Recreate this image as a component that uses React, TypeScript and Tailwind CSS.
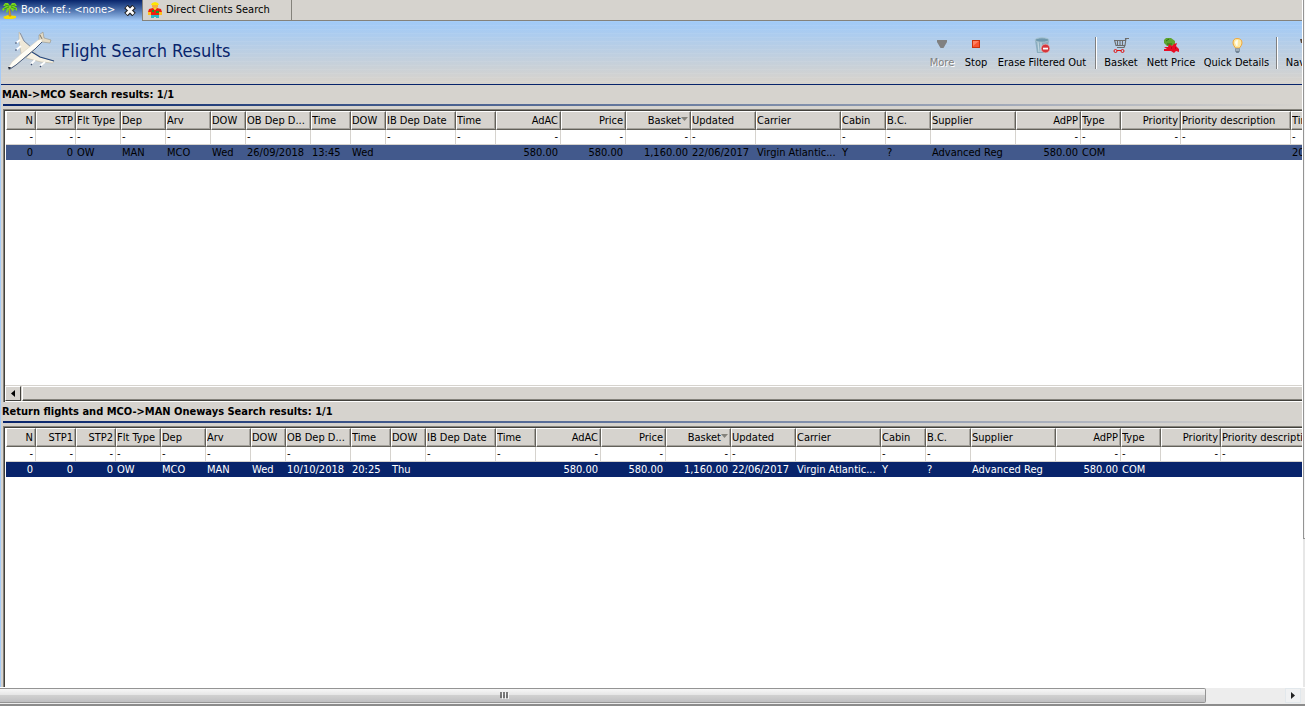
import { ReactNode } from 'react';
import { clsx } from 'clsx';

type Column = { label: string; width: number; filter?: boolean; right?: boolean; sorted?: boolean };

const COMMON_COLUMNS: Column[] = [
  { label: 'Flt Type', width: 45, filter: true },
  { label: 'Dep', width: 45, filter: true },
  { label: 'Arv', width: 45, filter: true },
  { label: 'DOW', width: 35 },
  { label: 'OB Dep D...', width: 65, filter: true },
  { label: 'Time', width: 40 },
  { label: 'DOW', width: 35 },
  { label: 'IB Dep Date', width: 70, filter: true },
  { label: 'Time', width: 40, filter: true },
  { label: 'AdAC', width: 65, filter: true, right: true },
  { label: 'Price', width: 65, filter: true, right: true },
  { label: 'Basket', width: 65, filter: true, right: true, sorted: true },
  { label: 'Updated', width: 65, filter: true },
  { label: 'Carrier', width: 85 },
  { label: 'Cabin', width: 45, filter: true },
  { label: 'B.C.', width: 45, filter: true },
  { label: 'Supplier', width: 85 },
  { label: 'AdPP', width: 65, filter: true, right: true },
  { label: 'Type', width: 40, filter: true },
  { label: 'Priority', width: 60, filter: true, right: true },
  { label: 'Priority description', width: 110, filter: true },
];

const OUTBOUND_COLUMNS: Column[] = [
  { label: 'N', width: 30, filter: true, right: true },
  { label: 'STP', width: 40, filter: true, right: true },
  ...COMMON_COLUMNS,
  { label: 'Time', width: 60, filter: true },
];

const RETURN_COLUMNS: Column[] = [
  { label: 'N', width: 30, filter: true, right: true },
  { label: 'STP1', width: 40, filter: true, right: true },
  { label: 'STP2', width: 40, filter: true, right: true },
  ...COMMON_COLUMNS,
];

const OUTBOUND_ROW = [
  '0', '0', 'OW', 'MAN', 'MCO', 'Wed', '26/09/2018', '13:45', 'Wed', '', '', '580.00', '580.00', '1,160.00',
  '22/06/2017', 'Virgin Atlantic...', 'Y', '?', 'Advanced Reg', '580.00', 'COM', '', '', '20:25',
];

const RETURN_ROW = [
  '0', '0', '0', 'OW', 'MCO', 'MAN', 'Wed', '10/10/2018', '20:25', 'Thu', '', '', '580.00', '580.00', '1,160.00',
  '22/06/2017', 'Virgin Atlantic...', 'Y', '?', 'Advanced Reg', '580.00', 'COM', '', '',
];

function PalmIcon() {
  return (
    <svg viewBox="0 0 16 17" className="w-4 h-[17px] shrink-0" aria-hidden="true">
      <path d="M1 15 L6 13 L14 14 L14 16 L10 17 H3Z" fill="#f5dc00" />
      <path d="M7.5 5 L9 14 H7 L7 6Z" fill="#e0a020" stroke="#b07a10" strokeWidth=".5" />
      <path d="M8 4 L6 1 L3 1 L1 4 L4 4 L0 7 L1 9 L5 6 L4 10 L5 11 L8 6 L11 10 L12 7 L15 9 V6 L12 4 L15 4 L13 1 L10 1Z" fill="#7ad321" />
      <path d="M7 4 L3 3 M7 5 L2 7 M9 4 L13 3 M9 5 L14 7" stroke="#2f8f0c" strokeWidth=".8" />
    </svg>
  );
}

function ClientIcon() {
  return (
    <svg viewBox="0 0 16 17" className="w-4 h-[17px] shrink-0" aria-hidden="true">
      <path d="M5 3 H11 V5 L9 7 H7 L5 5Z" fill="#f6b23c" />
      <path d="M4 3 L5 1 L8 0 L11 1 L12 3Z" fill="#ffe600" />
      <path d="M2 7 L6 6 L8 8 L10 6 L14 7 L15 10 L12 11 V14 H4 V11 L1 10Z" fill="#ee2210" />
      <path d="M1 10 L4 10 L4 13 L1 13Z M12 10 H15 V13 H12Z" fill="#ffc01e" />
      <path d="M5 8 H7 V10 H5Z M9 9 H12 V11 H9Z" fill="#19a02c" />
      <path d="M6.5 6 L8 8 L9.5 6Z" fill="#ffe600" />
      <path d="M4 13 H12 V16 H9 V15 H7 V16 H4Z" fill="#2bb9c4" />
    </svg>
  );
}

function PlaneIcon() {
  return (
    <svg viewBox="0 0 48 40" className="w-12 h-10 shrink-0" aria-hidden="true">
      {/* wings */}
      <path d="M12 1 L14 3 L17 10 L24 16 L15 24 L14 22 L12 9Z" fill="#efe8d8" stroke="#b9b09b" strokeWidth=".5" />
      <path d="M13 2 L17 10 L24 16" fill="none" stroke="#6d7f9e" strokeWidth=".8" />
      <path d="M26 20 L33 26 L47 30 L46 32 L34 31 L19 27Z" fill="#f6f1e3" stroke="#b9b09b" strokeWidth=".5" />
      <path d="M25 21 L33 26 L47 30" fill="none" stroke="#25477f" strokeWidth="1.2" />
      {/* tail */}
      <path d="M32 9 L32 4 L36 1 L37 7 L44 9 L43 12 L35 11Z" fill="#e1d9c5" stroke="#8b8577" strokeWidth=".5" />
      <path d="M33 4 L35 8" stroke="#7d7666" />
      {/* fuselage */}
      <path d="M1 37 L5 31 L15 22 L31 9 L35 8 L35 11 L28 18 L9 34 L2 38Z" fill="#fffdf5" stroke="#d2cbb9" strokeWidth=".5" />
      <path d="M3 38 L9 34 L28 18 L35 11" fill="none" stroke="#475a7c" />
      <path d="M1 36 L4 36 L2 39Z" fill="#222a3a" />
      {/* engines */}
      <path d="M13 9 L9 12 M14 15 L9 19 M28 29 L24 33 M38 31 L33 35" stroke="#fff" strokeWidth="1.8" />
      <path d="M8 12 H10 M8 19 H10 M24 33 L25 34 M33 35 L34 36" stroke="#38496a" strokeWidth="1.2" />
    </svg>
  );
}

function MoreIcon() {
  return (
    <svg viewBox="0 0 16 16" className="w-4 h-4" aria-hidden="true">
      <path d="M3 3 H13 V5 L9.5 11 H6.5 L3 5Z" fill="#808080" />
    </svg>
  );
}

function StopIcon() {
  return (
    <svg viewBox="0 0 16 16" className="w-4 h-4" aria-hidden="true">
      <rect x="4.5" y="3.5" width="7" height="7" fill="#f8532f" stroke="#c8330e" />
      <path d="M5 4 H11 L5 9Z" fill="#ff8060" />
    </svg>
  );
}

function EraseIcon() {
  return (
    <svg viewBox="0 0 16 16" className="w-4 h-4" aria-hidden="true">
      <path d="M1 3 H15 L13 16 H3Z" fill="#8badbf" />
      <path d="M4 5 L5 15 M7 5 V15" stroke="#c0d6e0" strokeWidth="1.3" />
      <ellipse cx="8" cy="3" rx="7" ry="2.2" fill="#6f98ad" stroke="#a7c3d0" />
      <circle cx="11.5" cy="11.5" r="4.3" fill="#d5363b" stroke="#f0b7b4" strokeWidth=".6" />
      <rect x="9" y="10.7" width="5" height="1.8" fill="#fff" />
    </svg>
  );
}

function BasketIcon() {
  return (
    <svg viewBox="0 0 16 16" className="w-4 h-4" aria-hidden="true">
      <path d="M1 3.5 H12.5 V1.5 H16 M1.5 3 L3 8.5 H12 L13 1.5 M4.5 4 V8 M7 4 V8 M9.5 4 V8 M12 8 L11 10.5 H4" fill="none" stroke="#6b6b6b" strokeWidth="1.1" />
      <path d="M4 13.5 H8" stroke="#e01414" />
      <circle cx="2.5" cy="14" r="1.5" fill="none" stroke="#e01414" />
      <circle cx="9.5" cy="14" r="1.5" fill="none" stroke="#e01414" />
    </svg>
  );
}

function NettPriceIcon() {
  return (
    <svg viewBox="0 0 16 16" className="w-4 h-4" aria-hidden="true">
      <path d="M3 1 H8 L12 4 V7 L9 9 H4 L1 6 V3Z" fill="#5fa52f" />
      <path d="M3 4 L6 2 M4 7 H9" stroke="#2f6f14" />
      <path d="M1 10 H5 L6 7 L9 9 L11 7 L14 6 L13 9 L16 12 V15 L13 14 L11 16 L8 14 H1 V12 H4Z" fill="#e80d25" />
      <path d="M8 11 H9 M12 11 H13" stroke="#8f0615" />
    </svg>
  );
}

function BulbIcon() {
  return (
    <svg viewBox="0 0 16 16" className="w-4 h-4" aria-hidden="true">
      <path d="M8 1.5 Q13 1.5 13 6 Q13 8 10.5 11 H6.5 Q4 8 4 6 Q4 1.5 8 1.5Z" fill="#ffe9a1" stroke="#f0a83c" />
      <path d="M6 6 Q6 3 9 3 L8.5 9 H7.5Z" fill="#fffdf0" />
      <path d="M6 11.5 H11 V14 L9.5 16 H7.5 L6 14Z" fill="#6f8294" />
      <path d="M6.5 13 H10.5" stroke="#d0dbe3" />
    </svg>
  );
}

function NavigateIcon() {
  return (
    <svg viewBox="0 0 16 16" className="w-4 h-4 self-center shrink-0" aria-hidden="true">
      <path d="M0 2 H5 V4 H3 V6 H1Z" fill="#5b4636" />
    </svg>
  );
}

function ToolButton({ label, icon, className, disabled }: { label: string; icon: ReactNode; className: string; disabled?: boolean }) {
  return (
    <button
      type="button"
      disabled={disabled}
      className={clsx(
        'flex flex-col items-center gap-0.5 whitespace-nowrap leading-4',
        disabled && 'text-[#808080] [text-shadow:1px_1px_0_#fff]',
        className,
      )}
    >
      {icon}
      {label}
    </button>
  );
}

function Separator() {
  return <div className="w-0.5 h-8 mx-1 bg-[#808080] border-r border-white shrink-0" />;
}

function ResultsTable({ columns, row, active }: { columns: Column[]; row: string[]; active?: boolean }) {
  return (
    <table className="w-full table-fixed border-separate border-spacing-0 whitespace-nowrap">
      <colgroup>
        {columns.map((col, i) => (
          <col key={i} style={{ width: col.width }} />
        ))}
      </colgroup>
      <thead>
        <tr className="h-[19px] bg-[#d6d3ce]">
          {columns.map((col, i) => (
            <th
              key={i}
              scope="col"
              className={clsx(
                'p-0 overflow-hidden font-normal leading-4 border-t border-l border-t-white border-l-white border-r border-b border-r-[#63615a] border-b-[#63615a] shadow-[inset_-1px_-1px_0_#a5a29c]',
                col.right ? 'text-right pr-0.5' : 'text-left',
              )}
            >
              {col.label}
              {col.sorted && (
                <svg viewBox="0 0 7 4" className="inline-block w-[7px] h-1 mb-1" aria-hidden="true">
                  <path d="M0 0 H7 L3.5 4Z" fill="#84827b" />
                </svg>
              )}
            </th>
          ))}
        </tr>
      </thead>
      <tbody>
        <tr className="h-[15px]">
          {columns.map((col, i) => (
            <td
              key={i}
              className={clsx(
                'p-0 leading-[14px] border-r border-b border-[#d6d3ce]',
                col.right ? 'text-right pr-0.5' : 'pl-px',
              )}
            >
              {col.filter ? '-' : ''}
            </td>
          ))}
        </tr>
        <tr className={clsx('h-[15px]', active ? 'bg-[#08246b] text-white' : 'bg-[#42598c]')}>
          {row.map((value, i) => (
            <td
              key={i}
              className={clsx('p-0 leading-[15px] overflow-hidden', columns[i].right ? 'text-right pr-[3px]' : 'pl-px')}
            >
              {value}
            </td>
          ))}
        </tr>
      </tbody>
    </table>
  );
}

function ResultsPanel({ title, className, children }: { title: string; className: string; children: ReactNode }) {
  return (
    <section className={clsx('flex flex-col min-h-0', className)}>
      <h2 className="h-[19px] shrink-0 pl-px font-bold leading-5">{title}</h2>
      <div className="h-0.5 ml-0.5 mb-[3px] bg-linear-to-r from-[#08246b] to-[#d6d3ce] shrink-0" />
      <div className="flex-1 flex flex-col min-h-0 ml-0.5 bg-white border-t border-l border-[#84827b]">
        <div className="flex-1 flex flex-col min-h-0 border-t border-l border-[#42413c]">{children}</div>
      </div>
    </section>
  );
}

export default function App() {
  return (
    <div className="flex flex-col h-screen min-h-96 overflow-hidden bg-[#d6d3ce] text-black text-[11px] font-['DejaVu_Sans_Condensed','Noto_Sans',sans-serif]">
      <div className="flex-1 flex min-h-0">
        <div className="flex-1 flex flex-col min-w-0">
          {/* Editor tabs */}
          <nav className="flex h-[21px] shrink-0">
            <div className="flex items-center w-[142px] pl-0.5 pr-1.5 text-white bg-linear-to-b from-[#08246b] to-[#a5cbf7]">
              <PalmIcon />
              <button type="button" className="flex-1 pl-[3px] text-left whitespace-nowrap">Book. ref.: &lt;none&gt;</button>
              <button type="button" aria-label="Close tab">
                <svg viewBox="0 0 12 11" className="w-3 h-[11px]" aria-hidden="true">
                  <path d="M2 1.5 L10 9.5 M10 1.5 L2 9.5" stroke="#222" strokeWidth="5" />
                  <path d="M2.5 2 L9.5 9 M9.5 2 L2.5 9" stroke="#fff" strokeWidth="2.6" />
                </svg>
              </button>
            </div>
            <div className="flex-1 flex border-l border-b border-[#84827b]">
              <button type="button" className="flex items-center gap-[3px] w-[149px] pl-1 whitespace-nowrap border-r border-[#84827b]">
                <ClientIcon />
                Direct Clients Search
              </button>
            </div>
          </nav>

          <main className="flex-1 flex flex-col min-h-0 border-l border-[#a5cbf7]">
            {/* Title and toolbar */}
            <header className="flex items-start h-16 shrink-0 overflow-hidden border-b border-[#08246b] bg-[repeating-linear-gradient(to_bottom,#ffffff10_0px,#ffffff10_1px,transparent_1px,transparent_4px),linear-gradient(to_bottom,#a0caf8,#d6d3ce_95%)]">
              <div className="flex items-center gap-1.5 pl-1.5 pt-2.5">
                <PlaneIcon />
                <h1 className="text-[18px] leading-6 text-[#08246b] whitespace-nowrap">Flight Search Results</h1>
              </div>
              <div className="flex items-start ml-auto pt-4" role="toolbar">
                <ToolButton label="More" icon={<MoreIcon />} className="w-[34px]" disabled />
                <ToolButton label="Stop" icon={<StopIcon />} className="w-[34px]" />
                <ToolButton label="Erase Filtered Out" icon={<EraseIcon />} className="w-[98px]" />
                <Separator />
                <ToolButton label="Basket" icon={<BasketIcon />} className="w-10" />
                <ToolButton label="Nett Price" icon={<NettPriceIcon />} className="w-[60px]" />
                <ToolButton label="Quick Details" icon={<BulbIcon />} className="w-[71px]" />
                <Separator />
                <div className="w-5 pl-0.5 overflow-hidden">
                  <ToolButton label="Navigate" icon={<NavigateIcon />} className="w-12" />
                </div>
              </div>
            </header>

            <ResultsPanel title="MAN->MCO Search results: 1/1" className="flex-[317]">
              <div className="flex-1 min-h-0 pl-px overflow-hidden">
                <ResultsTable columns={OUTBOUND_COLUMNS} row={OUTBOUND_ROW} />
              </div>
              <div className="flex h-[17px] shrink-0 bg-[#d6d3ce] border-t border-b border-t-[#d6d3ce] border-b-white">
                <button
                  type="button"
                  aria-label="Scroll left"
                  className="flex items-center justify-center w-4 pr-px border border-white border-r-[#42413c] border-b-[#42413c]"
                >
                  <svg viewBox="0 0 4 7" className="w-1 h-[7px]" aria-hidden="true">
                    <path d="M4 0 V7 L0 3.5Z" />
                  </svg>
                </button>
                <div className="flex-1 ml-px border border-r-0 border-white border-b-[#42413c] shadow-[inset_0_-1px_0_#84827b]" />
              </div>
            </ResultsPanel>

            <ResultsPanel title="Return flights and MCO->MAN Oneways Search results: 1/1" className="flex-[285]">
              <div className="flex-1 min-h-0 pl-px overflow-hidden">
                <ResultsTable columns={RETURN_COLUMNS} row={RETURN_ROW} active />
              </div>
            </ResultsPanel>
          </main>
        </div>

        {/* Edge of the outer vertical scrollbar */}
        <div className="flex flex-col w-[3px] bg-[#e7e7e7] border-l border-white">
          <div className="h-[539px] border-l border-b border-[#949494] bg-[#f4f4f4]" />
        </div>
      </div>

      {/* Outer horizontal scrollbar */}
      <footer className="flex h-[19px] shrink-0 bg-[#ededed] border-t border-white border-b-2 border-b-[#8c8c8c]">
        <div className="flex-1 flex">
          <div className="flex items-center justify-center w-[1206px] max-w-full h-[15px] pr-[197px] border border-l-0 border-[#949494] rounded-r-xs bg-[linear-gradient(to_bottom,#f7f7f7,#e6e6e6_45%,#d0d0d0_50%,#bfbfc1)]">
            <svg viewBox="0 0 9 7" className="w-[9px] h-[7px]" aria-hidden="true">
              <path d="M1 0 V6 M4 0 V6 M7 0 V6" stroke="#4d4d4d" strokeWidth="1.4" />
              <path d="M2.5 1 V7 M5.5 1 V7 M8.5 1 V7" stroke="#fff" strokeWidth=".8" />
            </svg>
          </div>
        </div>
        <button type="button" aria-label="Scroll right" className="flex items-center justify-center w-4 h-[15px] mr-1 border border-[#e2e8ec] bg-[#f0f1f2]">
          <svg viewBox="0 0 4 7" className="w-1 h-[7px]" aria-hidden="true">
            <path d="M0 0 V7 L4 3.5Z" fill="#222" />
          </svg>
        </button>
      </footer>
    </div>
  );
}
